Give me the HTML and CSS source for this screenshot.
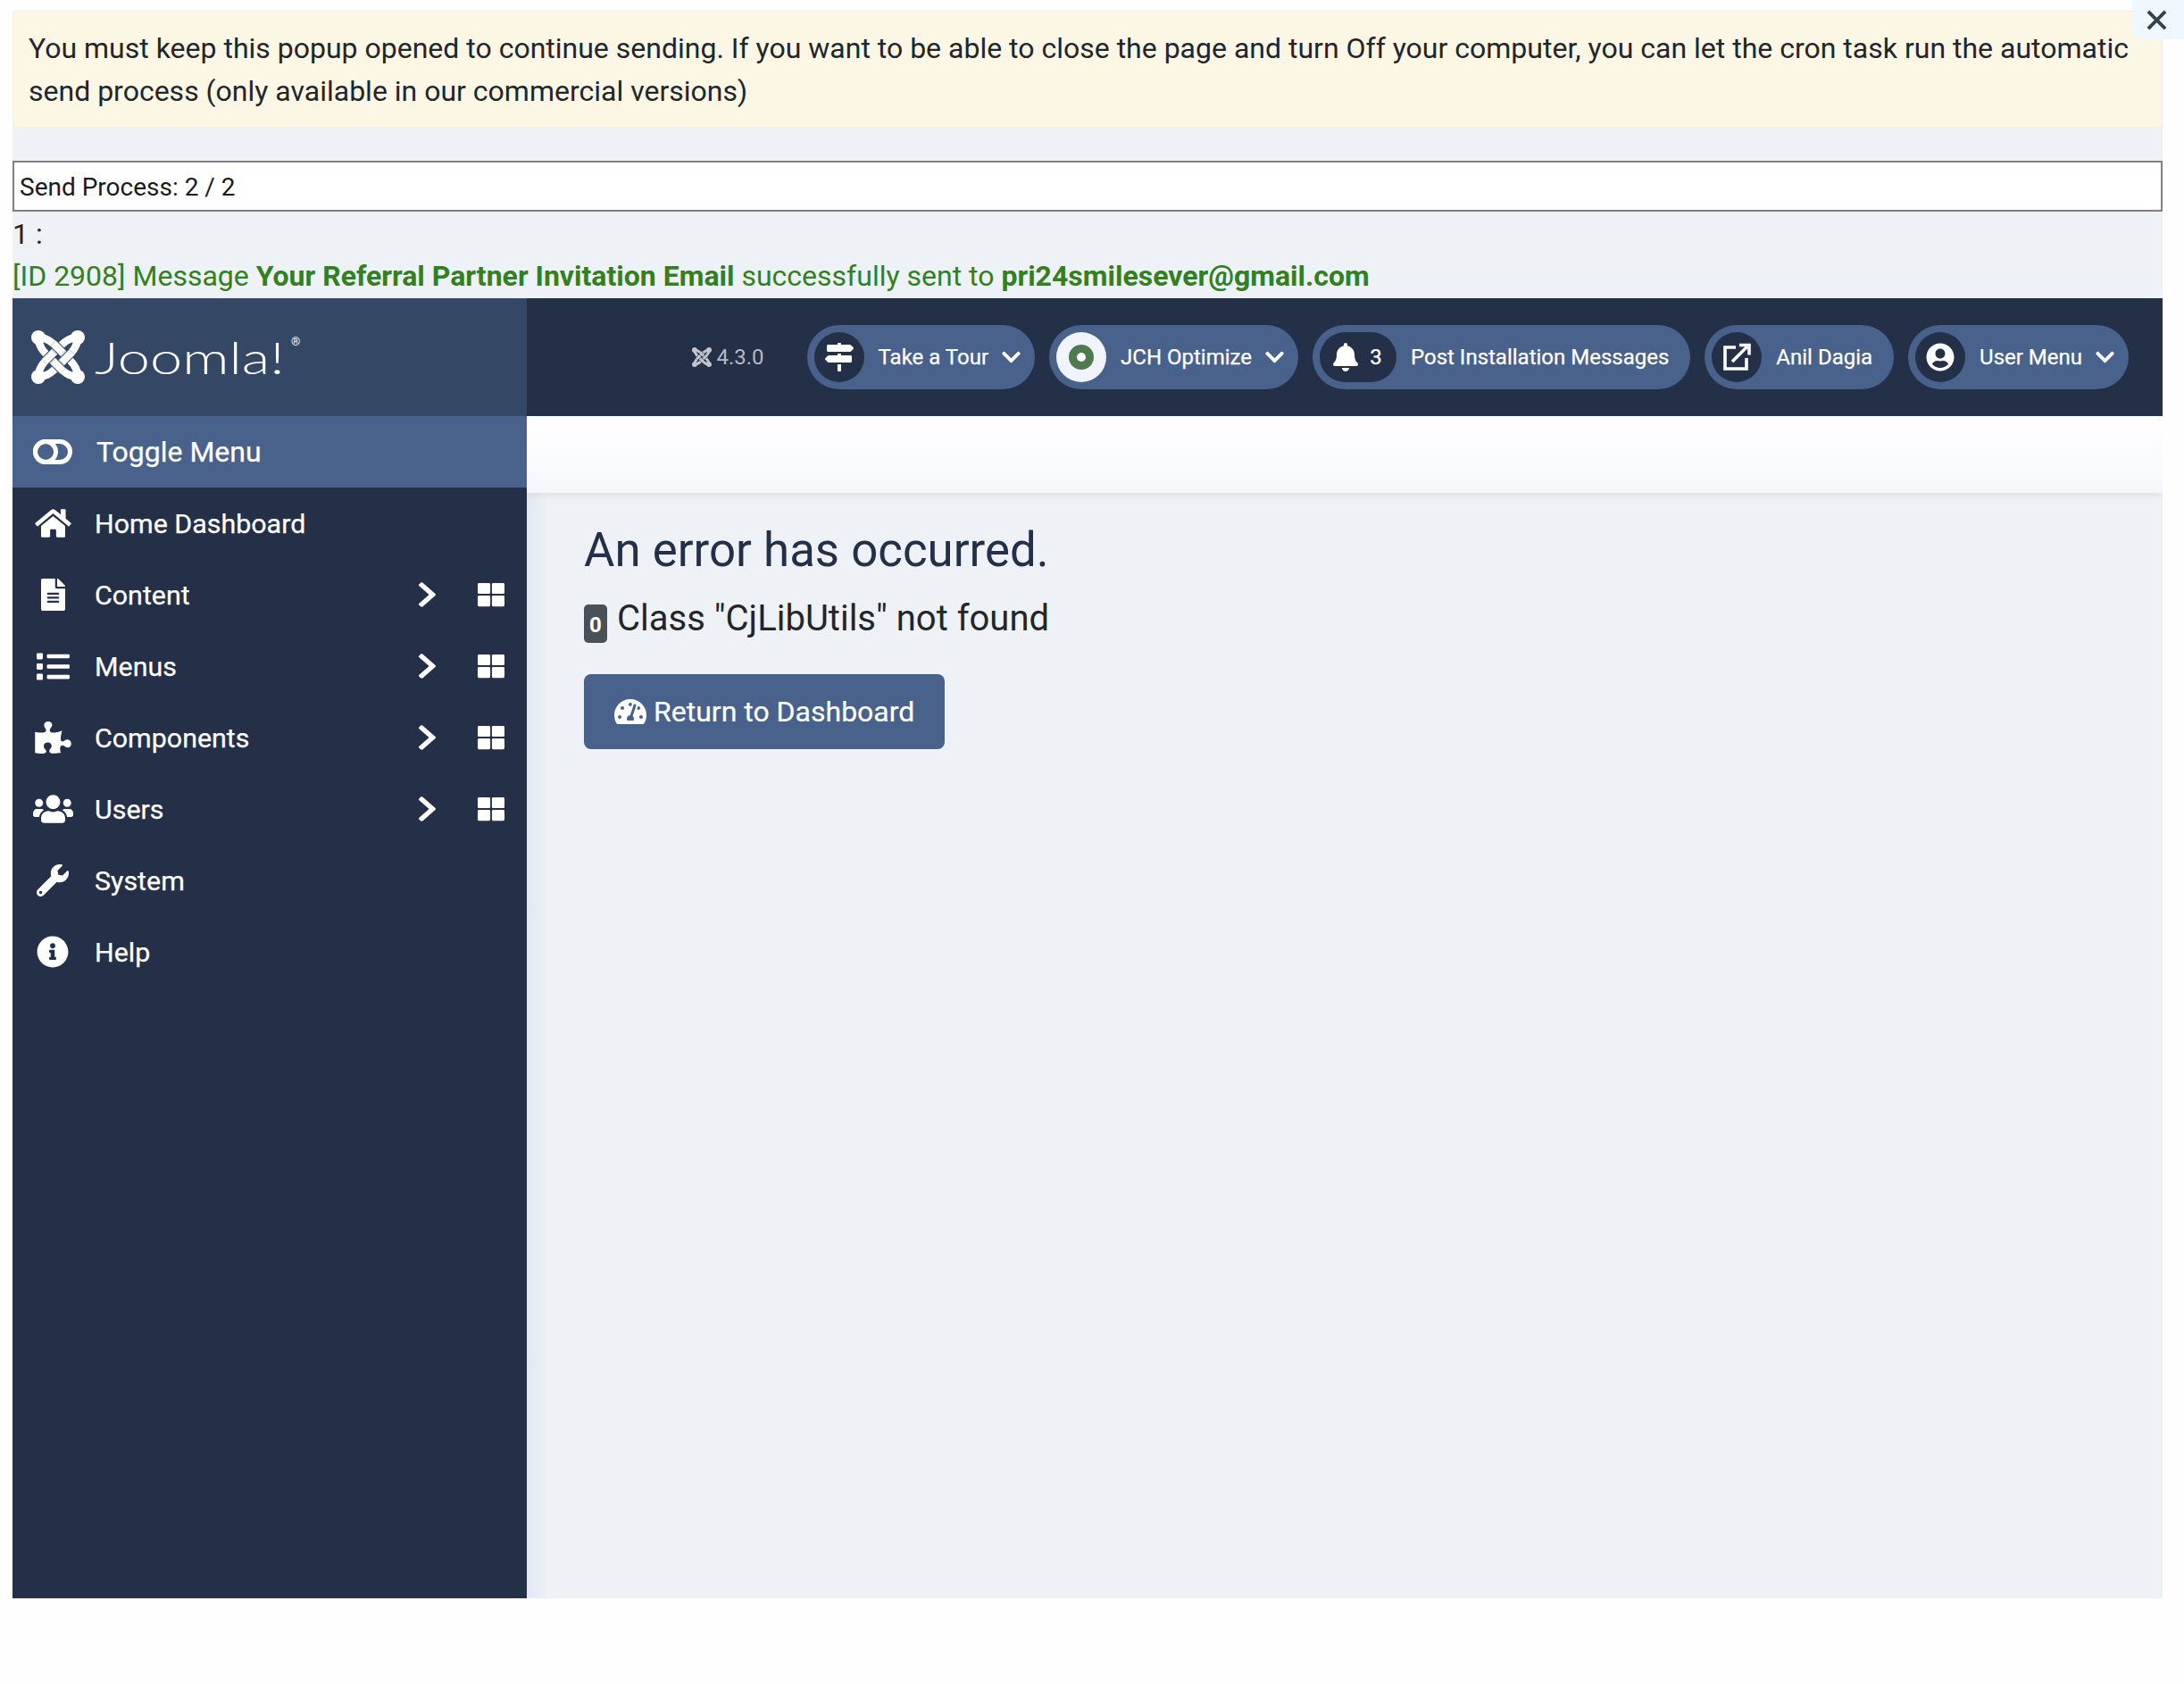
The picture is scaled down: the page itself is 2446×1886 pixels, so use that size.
FILE: index.html
```html
<!DOCTYPE html>
<html lang="en">
<head>
<meta charset="utf-8">
<title>Joomla send process</title>
<link rel="stylesheet" href="styles.css">
</head>
<body>
<svg class="defs" width="0" height="0" aria-hidden="true">
  <symbol id="joomla" viewBox="0 0 60 60">
    <g class="knot-line" stroke-width="8.5">
      <path d="M8 8C8 18 14 24 20 30L30 40C36 46 42 52 52 52"/>
      <path d="M8 8C18 8 24 14 30 20L40 30C46 36 52 42 52 52"/>
      <path d="M52 8C42 8 36 14 30 20L20 30C14 36 8 42 8 52"/>
      <path d="M52 8C52 18 46 24 40 30L30 40C24 46 18 52 8 52"/>
    </g>
    <g class="knot-gap" stroke-width="10.5">
      <path d="M24.5 14.5L35.5 25.5"/><path d="M45.5 24.5L34.5 35.5"/><path d="M35.5 45.5L24.5 34.5"/><path d="M14.5 35.5L25.5 24.5"/>
    </g>
    <g class="knot-line" stroke-width="8.5">
      <path d="M24.5 14.5L35.5 25.5"/><path d="M45.5 24.5L34.5 35.5"/><path d="M35.5 45.5L24.5 34.5"/><path d="M14.5 35.5L25.5 24.5"/>
    </g>
    <circle cx="8" cy="8" r="8"/><circle cx="52" cy="8" r="8"/><circle cx="8" cy="52" r="8"/><circle cx="52" cy="52" r="8"/>
  </symbol>
  <symbol id="chev-d" viewBox="0 0 448 512"><path d="M207.029 381.476L12.686 187.132c-9.373-9.373-9.373-24.569 0-33.941l22.667-22.667c9.357-9.357 24.522-9.375 33.901-.04L224 284.505l154.745-154.021c9.379-9.335 24.544-9.317 33.901.04l22.667 22.667c9.373 9.373 9.373 24.569 0 33.941L240.971 381.476c-9.373 9.372-24.569 9.372-33.942 0z"/></symbol>
  <symbol id="chev-r" viewBox="0 0 320 512" preserveAspectRatio="none"><path d="M285.476 272.971L91.132 467.314c-9.373 9.373-24.569 9.373-33.941 0l-22.667-22.667c-9.357-9.357-9.375-24.522-.04-33.901L188.505 256 34.484 101.255c-9.335-9.379-9.317-24.544.04-33.901l22.667-22.667c9.373-9.373 24.569-9.373 33.941 0L285.475 239.03c9.373 9.372 9.373 24.568.001 33.941z"/></symbol>
  <symbol id="th" viewBox="0 0 512 512"><path d="M296 32h192c13.255 0 24 10.745 24 24v160c0 13.255-10.745 24-24 24H296c-13.255 0-24-10.745-24-24V56c0-13.255 10.745-24 24-24zm-80 0H24C10.745 32 0 42.745 0 56v160c0 13.255 10.745 24 24 24h192c13.255 0 24-10.745 24-24V56c0-13.255-10.745-24-24-24zM0 296v160c0 13.255 10.745 24 24 24h192c13.255 0 24-10.745 24-24V296c0-13.255-10.745-24-24-24H24c-13.255 0-24 10.745-24 24zm296 184h192c13.255 0 24-10.745 24-24V296c0-13.255-10.745-24-24-24H296c-13.255 0-24 10.745-24 24v160c0 13.255 10.745 24 24 24z"/></symbol>
</svg>

<div class="popup">
  <div class="notice">You must keep this popup opened to continue sending. If you want to be able to close the page and turn Off your computer, you can let the cron task run the automatic send process (only available in our commercial versions)</div>
  <div class="progress">Send Process: 2 / 2</div>
  <div class="count">1 :</div>
  <div class="sent">[ID 2908] Message <b>Your Referral Partner Invitation Email</b> successfully sent to <b>pri24smilesever@gmail.com</b></div>

  <div class="admin">
    <header class="topbar">
      <div class="brand">
        <svg class="brand-mark"><use href="#joomla"/></svg>
        <span class="brand-word">Joomla!</span>
        <span class="brand-reg">®</span>
      </div>
      <div class="tools">
        <span class="version"><svg class="version-mark"><use href="#joomla"/></svg>4.3.0</span>
        <a class="pill">
          <span class="disc"><svg class="ico" viewBox="0 0 512 512"><path d="M507.31 84.69L464 41.37c-6-6-14.14-9.37-22.63-9.37H288V16c0-8.84-7.16-16-16-16h-32c-8.84 0-16 7.16-16 16v16H56c-13.25 0-24 10.75-24 24v80c0 13.25 10.75 24 24 24h385.37c8.49 0 16.62-3.37 22.63-9.37l43.31-43.31c6.25-6.26 6.25-16.38 0-22.63zM224 496c0 8.84 7.16 16 16 16h32c8.84 0 16-7.16 16-16V384h-64v112zm232-272H288v-32h-64v32H70.63c-8.49 0-16.62 3.37-22.63 9.37L4.69 276.69c-6.25 6.25-6.25 16.38 0 22.63L48 342.63c6 6 14.14 9.37 22.63 9.37H456c13.25 0 24-10.75 24-24v-80c0-13.25-10.75-24-24-24z"/></svg></span>
          <span class="pill-label">Take a Tour</span>
          <svg class="caret"><use href="#chev-d"/></svg>
        </a>
        <a class="pill">
          <span class="disc disc-light"><span class="target"></span></span>
          <span class="pill-label">JCH Optimize</span>
          <svg class="caret"><use href="#chev-d"/></svg>
        </a>
        <a class="pill pill-end">
          <span class="disc disc-wide"><svg class="ico" viewBox="0 0 448 512"><path d="M224 512c35.32 0 63.97-28.65 63.97-64H160.03c0 35.35 28.65 64 63.97 64zm215.39-149.71c-19.32-20.76-55.47-51.99-55.47-154.29 0-77.7-54.48-139.9-127.94-155.16V32c0-17.67-14.32-32-31.98-32s-31.98 14.33-31.98 32v20.84C118.56 68.1 64.08 130.3 64.08 208c0 102.3-36.15 133.53-55.47 154.29-6 6.45-8.66 14.16-8.61 21.71.11 16.4 12.98 32 32.1 32h383.8c19.12 0 32-15.6 32.1-32 .05-7.55-2.61-15.27-8.61-21.71z"/></svg><span class="disc-num">3</span></span>
          <span class="pill-label">Post Installation Messages</span>
        </a>
        <a class="pill pill-end">
          <span class="disc"><svg class="ico line-ico" viewBox="0 0 32 32"><path d="M15 5H3v24h24V17"/><path d="M11 21L28 4"/><path d="M19 2.5h11v11"/></svg></span>
          <span class="pill-label">Anil Dagia</span>
        </a>
        <a class="pill">
          <span class="disc"><svg class="ico" viewBox="0 0 496 512"><path d="M248 8C111 8 0 119 0 256s111 248 248 248 248-111 248-248S385 8 248 8zm0 96c48.6 0 88 39.4 88 88s-39.4 88-88 88-88-39.4-88-88 39.4-88 88-88zm0 344c-58.7 0-111.3-26.6-146.5-68.2 18.8-35.4 55.6-59.8 98.5-59.8 2.4 0 4.8.4 7.1 1.1 13 4.2 26.6 6.9 40.9 6.9 14.3 0 28-2.7 40.9-6.9 2.3-.7 4.7-1.1 7.1-1.1 42.9 0 79.7 24.4 98.5 59.8C359.3 421.4 306.7 448 248 448z"/></svg></span>
          <span class="pill-label">User Menu</span>
          <svg class="caret"><use href="#chev-d"/></svg>
        </a>
      </div>
    </header>

    <div class="body-row">
      <nav class="sidebar">
        <a class="nav-item nav-toggle">
          <span class="nav-ico"><svg class="ico-toggle line-ico" viewBox="0 0 44 28"><rect x="2.5" y="2.5" width="39" height="23" rx="11.5"/><circle cx="14" cy="14" r="11.5"/></svg></span>
          <span class="nav-label">Toggle Menu</span>
        </a>
        <a class="nav-item"><span class="nav-ico"><svg class="ico-home" viewBox="0 0 576 512"><path d="M280.37 148.26L96 300.11V464a16 16 0 0 0 16 16l112.06-.29a16 16 0 0 0 15.92-16V368a16 16 0 0 1 16-16h64a16 16 0 0 1 16 16v95.64a16 16 0 0 0 16 16.05L464 480a16 16 0 0 0 16-16V300L295.67 148.26a12.19 12.19 0 0 0-15.3 0zM571.6 251.47L488 182.56V44.05a12 12 0 0 0-12-12h-56a12 12 0 0 0-12 12v72.61L318.47 43a48 48 0 0 0-61 0L4.34 251.47a12 12 0 0 0-1.6 16.9l25.5 31A12 12 0 0 0 45.15 301l235.22-193.74a12.19 12.19 0 0 1 15.3 0L530.9 301a12 12 0 0 0 16.9-1.6l25.5-31a12 12 0 0 0-1.7-16.93z"/></svg></span><span class="nav-label">Home Dashboard</span></a>
        <a class="nav-item"><span class="nav-ico"><svg class="ico-file" viewBox="0 0 384 512"><path d="M224 136V0H24C10.7 0 0 10.7 0 24v464c0 13.3 10.7 24 24 24h336c13.3 0 24-10.7 24-24V160H248c-13.2 0-24-10.8-24-24zm64 236c0 6.6-5.4 12-12 12H108c-6.6 0-12-5.4-12-12v-8c0-6.6 5.4-12 12-12h168c6.6 0 12 5.4 12 12v8zm0-64c0 6.6-5.4 12-12 12H108c-6.6 0-12-5.4-12-12v-8c0-6.6 5.4-12 12-12h168c6.6 0 12 5.4 12 12v8zm0-72v8c0 6.6-5.4 12-12 12H108c-6.6 0-12-5.4-12-12v-8c0-6.6 5.4-12 12-12h168c6.6 0 12 5.4 12 12zm96-114.1v6.1H256V0h6.1c6.4 0 12.5 2.5 17 7l97.9 98c4.5 4.5 7 10.6 7 16.9z"/></svg></span><span class="nav-label">Content</span><svg class="nav-chev"><use href="#chev-r"/></svg><svg class="nav-grid"><use href="#th"/></svg></a>
        <a class="nav-item"><span class="nav-ico"><svg class="ico-list" viewBox="0 0 512 512"><path d="M80 368H16a16 16 0 0 0-16 16v64a16 16 0 0 0 16 16h64a16 16 0 0 0 16-16v-64a16 16 0 0 0-16-16zm0-320H16A16 16 0 0 0 0 64v64a16 16 0 0 0 16 16h64a16 16 0 0 0 16-16V64a16 16 0 0 0-16-16zm0 160H16a16 16 0 0 0-16 16v64a16 16 0 0 0 16 16h64a16 16 0 0 0 16-16v-64a16 16 0 0 0-16-16zm416 176H176a16 16 0 0 0-16 16v32a16 16 0 0 0 16 16h320a16 16 0 0 0 16-16v-32a16 16 0 0 0-16-16zm0-320H176a16 16 0 0 0-16 16v32a16 16 0 0 0 16 16h320a16 16 0 0 0 16-16V80a16 16 0 0 0-16-16zm0 160H176a16 16 0 0 0-16 16v32a16 16 0 0 0 16 16h320a16 16 0 0 0 16-16v-32a16 16 0 0 0-16-16z"/></svg></span><span class="nav-label">Menus</span><svg class="nav-chev"><use href="#chev-r"/></svg><svg class="nav-grid"><use href="#th"/></svg></a>
        <a class="nav-item"><span class="nav-ico"><svg class="ico-home" viewBox="0 0 576 512"><path d="M519.442 288.651c-41.519 0-59.5 31.593-82.058 31.593C377.409 320.244 432 144 432 144s-196.288 80-196.288-3.297c0-35.827 36.288-46.25 36.288-85.985C272 19.216 243.885 0 210.539 0c-34.654 0-66.366 18.891-66.366 56.346 0 41.364 31.711 59.277 31.711 81.75C175.885 207.719 0 166.758 0 166.758v333.237s178.635 41.047 178.635-28.662c0-22.473-40-40.107-40-81.471 0-37.456 29.25-56.346 63.577-56.346 33.673 0 61.788 19.216 61.788 54.717 0 39.735-36.288 50.158-36.288 85.985 0 60.803 129.675 25.73 181.23 25.73 0 0-34.725-120.101 25.827-120.101 35.962 0 46.423 36.152 86.308 36.152C556.712 416 576 387.99 576 354.443c0-34.199-18.962-65.792-56.558-65.792z"/></svg></span><span class="nav-label">Components</span><svg class="nav-chev"><use href="#chev-r"/></svg><svg class="nav-grid"><use href="#th"/></svg></a>
        <a class="nav-item"><span class="nav-ico"><svg class="ico-users" viewBox="0 0 640 512"><path d="M96 224c35.3 0 64-28.7 64-64s-28.7-64-64-64-64 28.7-64 64 28.7 64 64 64zm448 0c35.3 0 64-28.7 64-64s-28.7-64-64-64-64 28.7-64 64 28.7 64 64 64zm32 32h-64c-17.6 0-33.5 7.1-45.1 18.6 40.3 22.1 68.9 62 75.1 109.4h66c17.7 0 32-14.3 32-32v-32c0-35.3-28.7-64-64-64zm-256 0c61.9 0 112-50.1 112-112S381.9 32 320 32 208 82.1 208 144s50.1 112 112 112zm76.8 32h-8.3c-20.8 10-43.9 16-68.5 16s-47.6-6-68.5-16h-8.3C179.6 288 128 339.6 128 403.2V432c0 26.5 21.5 48 48 48h288c26.5 0 48-21.5 48-48v-28.8c0-63.6-51.6-115.2-115.2-115.2zm-223.7-13.4C161.5 263.1 145.6 256 128 256H64c-35.3 0-64 28.7-64 64v32c0 17.7 14.3 32 32 32h65.9c6.3-47.4 34.9-87.3 75.2-109.4z"/></svg></span><span class="nav-label">Users</span><svg class="nav-chev"><use href="#chev-r"/></svg><svg class="nav-grid"><use href="#th"/></svg></a>
        <a class="nav-item"><span class="nav-ico"><svg class="ico-sq" viewBox="0 0 512 512"><path d="M507.73 109.1c-2.24-9.03-13.54-12.09-20.12-5.51l-74.36 74.36-67.88-11.31-11.31-67.88 74.36-74.36c6.62-6.62 3.43-17.9-5.66-20.16-47.38-11.74-99.55.91-136.58 37.93-39.64 39.64-50.55 97.1-34.05 147.2L18.74 402.76c-24.99 24.99-24.99 65.51 0 90.5 24.99 24.99 65.51 24.99 90.5 0l213.21-213.21c50.12 16.71 107.47 5.68 147.37-34.22 37.07-37.07 49.7-89.32 37.91-136.73zM64 472c-13.25 0-24-10.75-24-24 0-13.26 10.75-24 24-24s24 10.74 24 24c0 13.25-10.75 24-24 24z"/></svg></span><span class="nav-label">System</span></a>
        <a class="nav-item"><span class="nav-ico"><svg class="ico-sq" viewBox="0 0 512 512"><path d="M256 8C119.043 8 8 119.083 8 256c0 136.997 111.043 248 248 248s248-111.003 248-248C504 119.083 392.957 8 256 8zm0 110c23.196 0 42 18.804 42 42s-18.804 42-42 42-42-18.804-42-42 18.804-42 42-42zm56 254c0 6.627-5.373 12-12 12h-88c-6.627 0-12-5.373-12-12v-24c0-6.627 5.373-12 12-12h12v-64h-12c-6.627 0-12-5.373-12-12v-24c0-6.627 5.373-12 12-12h64c6.627 0 12 5.373 12 12v100h12c6.627 0 12 5.373 12 12v24z"/></svg></span><span class="nav-label">Help</span></a>
      </nav>
      <div class="main">
        <div class="subhead"></div>
        <div class="content">
          <h1 class="err-title">An error has occurred.</h1>
          <p class="err-text"><span class="badge">0</span> Class "CjLibUtils" not found</p>
          <a class="btn"><svg class="btn-ico" viewBox="0 0 576 512"><path d="M288 32C128.94 32 0 160.94 0 320c0 52.8 14.25 102.26 39.06 144.8 5.61 9.62 16.3 15.2 27.44 15.2h443c11.14 0 21.83-5.58 27.44-15.2C561.75 422.26 576 372.8 576 320c0-159.06-128.94-288-288-288zm0 64c14.71 0 26.58 10.13 30.32 23.65-1.11 2.26-2.64 4.23-3.45 6.67l-9.22 27.67c-5.13 3.49-10.97 6.01-17.64 6.01-17.67 0-32-14.33-32-32S270.33 96 288 96zM96 384c-17.67 0-32-14.33-32-32s14.33-32 32-32 32 14.33 32 32-14.33 32-32 32zm48-160c-17.67 0-32-14.33-32-32s14.33-32 32-32 32 14.33 32 32-14.33 32-32 32zm246.77-72.41l-61.33 184C343.13 347.33 352 364.54 352 384c0 11.72-3.38 22.55-8.88 32H232.88c-5.5-9.45-8.88-20.28-8.88-32 0-33.94 26.5-61.43 59.9-63.59l61.34-184.01c4.17-12.56 17.73-19.45 30.36-15.17 12.57 4.19 19.35 17.79 15.17 30.36zm14.66 57.2l15.52-46.55c3.47-1.29 7.13-2.23 11.05-2.23 17.67 0 32 14.33 32 32s-14.33 32-32 32c-11.38-.01-20.89-6.28-26.57-15.22zM480 384c-17.67 0-32-14.33-32-32s14.33-32 32-32 32 14.33 32 32-14.33 32-32 32z"/></svg>Return to Dashboard</a>
        </div>
      </div>
    </div>
  </div>
</div>
<button class="close" type="button" aria-label="Close"><svg class="close-ico" viewBox="0 0 24 24"><path d="M2 2L22 22M22 2L2 22"/></svg></button>
</body>
</html>
```
FILE: styles.css
```css
* { box-sizing: border-box; }
html { background: #fefefe; }
body { margin: 0; height: 1886px; padding: 12px 24px 0 14px; font-family: Roboto, "Liberation Sans", sans-serif; color: #22262a; overflow: hidden; }
.defs { position: absolute; }
svg { fill: #fff; display: block; }
a { color: inherit; text-decoration: none; }
.popup { background: #eef1f6; width: 2408px; }
.notice { height: 131px; background: #fbf7e4; border: 1px solid #f8eedb; border-radius: 5px; padding: 17px 17px; font-size: 32px; line-height: 48px; margin-bottom: 37px; }
.progress { height: 57px; background: #fff; border: 2px solid #808080; padding: 0 6px; font-size: 28px; line-height: 55px; color: #1a1a1a; }
.count, .sent { font-size: 32px; }
.count { height: 48px; line-height: 50px; }
.sent { height: 49px; line-height: 48px; color: #32801f; white-space: nowrap; }
.sent b { font-weight: 700; }
.admin { height: 1456px; display: flex; flex-direction: column; }
.topbar { height: 132px; display: flex; background: #243047; flex: none; }
.brand { width: 576px; background: #344866; display: flex; align-items: center; padding-left: 21px; --gap: #344866; }
.brand-mark { width: 60px; height: 60px; flex: none; }
.brand-word { width: 220px; margin-left: 11px; font-family: Lato, sans-serif; font-weight: 300; font-size: 50px; color: #fff; line-height: 60px; transform: scaleX(1.3); transform-origin: left center; white-space: nowrap; }
.brand-reg { align-self: flex-start; margin: 42px 0 0 0; color: #fff; font-size: 13px; line-height: 14px; }
.knot-line, .knot-gap { fill: none; }
.knot-line { stroke: #fff; }
.knot-gap { stroke: var(--gap); }
.tools { flex: 1; display: flex; align-items: center; justify-content: flex-end; padding-right: 38px; gap: 16px; --gap: #243047; }
.version { display: flex; align-items: center; color: #b3bac5; font-size: 24px; gap: 5px; margin-right: 32px; }
.version-mark { width: 22px; height: 22px; opacity: .72; }
.pill { height: 72px; border-radius: 36px; background: #48628c; display: flex; align-items: center; padding: 0 16px 0 8px; color: #fff; font-size: 24px; -webkit-text-stroke: .25px #fff; }
.pill-end { padding-right: 24px; }
.disc { width: 56px; height: 56px; border-radius: 28px; background: #243047; display: flex; align-items: center; justify-content: center; flex: none; margin-right: 16px; }
.disc-light { background: #f1f4fa; }
.disc-wide { width: 86px; gap: 11px; padding-right: 3px; }
.disc-num { font-size: 24px; }
.target { width: 28px; height: 28px; border-radius: 50%; background: #fff; border: 9px solid #4f7a50; }
.ico { width: 32px; height: 32px; }
.line-ico { fill: none; stroke: #fff; stroke-width: 3.6; }
.caret { width: 21px; height: 24px; margin-left: 15px; }
.body-row { flex: 1; display: flex; min-height: 0; }
.sidebar { width: 576px; background: #243047; flex: none; }
.nav-item { height: 80px; display: flex; align-items: center; color: #fff; font-size: 30.4px; padding-left: 22px; -webkit-text-stroke: .25px #fff; }
.nav-toggle { background: #48628c; font-size: 32px; }
.nav-toggle .nav-ico { margin-right: 26px; }
.nav-ico { width: 46px; height: 46px; display: flex; align-items: center; justify-content: center; margin-right: 24px; flex: none; }
.nav-label { flex: 1; }
.ico-toggle { width: 44px; height: 28px; stroke-width: 5; }
.ico-home { width: 41px; height: 36px; }
.ico-users { width: 45px; height: 36px; }
.ico-file { width: 27px; height: 36px; }
.ico-list { width: 37px; height: 37px; }
.ico-sq { width: 36px; height: 36px; }
.nav-chev { width: 23px; height: 32px; margin-right: 45px; }
.nav-grid { width: 30px; height: 30px; margin-right: 25px; }
.main { flex: 1; display: flex; flex-direction: column; min-width: 0; overflow: hidden; }
.subhead { height: 86px; flex: none; background: linear-gradient(#fff, #f6f7fb); box-shadow: 0 3px 8px rgba(36,48,71,.08); position: relative; }
.content { flex: 1; padding: 31px 64px; background: linear-gradient(90deg, #e2e7f1, #eef1f6 24px); }
.err-title { margin: 0; font-size: 52.8px; font-weight: 400; line-height: 66px; color: #243047; }
.err-text { margin: 16px 0 0; font-size: 40px; line-height: 56px; color: #22262a; display: flex; align-items: flex-start; gap: 11px; }
.badge { width: 26px; height: 43px; margin-top: 12px; background: #495057; color: #fff; border-radius: 5px; font-size: 24px; font-weight: 700; text-align: center; line-height: 46px; }
.btn { margin-top: 34px; width: 404px; height: 84px; background: #48628c; border-radius: 8px; color: #fff; font-size: 32px; display: flex; align-items: center; padding-left: 34px; gap: 8px; -webkit-text-stroke: .2px #fff; }
.btn-ico { width: 36px; height: 32px; }
.close { position: absolute; top: 0; right: 0; width: 58px; height: 44px; padding: 0 4px 0 0; border: 0; background: #f0f7ff; border-radius: 0 0 0 8px; display: flex; align-items: center; justify-content: center; }
.close-ico { width: 23px; height: 23px; fill: none; stroke: #33424e; stroke-width: 4; }
```
